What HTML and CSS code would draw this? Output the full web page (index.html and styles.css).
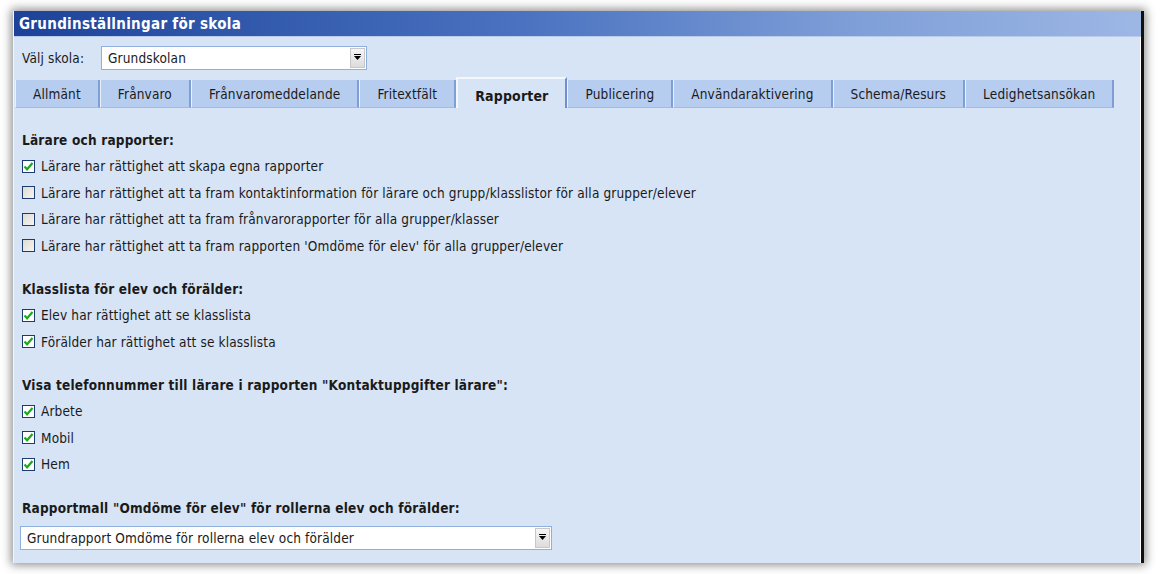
FILE: index.html
```html
<!DOCTYPE html>
<html lang="sv">
<head>
<meta charset="utf-8">
<title>Grundinställningar för skola</title>
<link rel="stylesheet" href="styles.css">
</head>
<body>
<div class="stage">
  <div class="panel">
    <div class="titlebar">Grundinställningar för skola</div>
    <div class="panel-body">
      <div class="school-row">
        <span class="school-label">Välj skola:</span>
        <div class="select select-school">
          <span class="select-value">Grundskolan</span>
          <span class="select-btn"><svg width="9" height="7" viewBox="0 0 9 7"><rect x="1" y="0" width="7" height="1" fill="#000"/><path d="M1 2h7L4.5 6z" fill="#000"/></svg></span>
        </div>
      </div>
      <div class="tabs">
        <div class="tab">Allmänt</div>
        <div class="tab">Frånvaro</div>
        <div class="tab">Frånvaromeddelande</div>
        <div class="tab">Fritextfält</div>
        <div class="tab active">Rapporter</div>
        <div class="tab">Publicering</div>
        <div class="tab">Användaraktivering</div>
        <div class="tab">Schema/Resurs</div>
        <div class="tab">Ledighetsansökan</div>
      </div>
      <div class="content">
        <section class="group">
          <h3 class="group-title">Lärare och rapporter:</h3>
          <label class="check-row"><span class="cb checked"><svg viewBox="0 0 11 11"><path d="M1.5 5.5l2.6 2.8L9.5 2" fill="none" stroke="#1fa81f" stroke-width="2.2"/></svg></span>Lärare har rättighet att skapa egna rapporter</label>
          <label class="check-row"><span class="cb"></span>Lärare har rättighet att ta fram kontaktinformation för lärare och grupp/klasslistor för alla grupper/elever</label>
          <label class="check-row"><span class="cb"></span>Lärare har rättighet att ta fram frånvarorapporter för alla grupper/klasser</label>
          <label class="check-row"><span class="cb"></span>Lärare har rättighet att ta fram rapporten 'Omdöme för elev' för alla grupper/elever</label>
        </section>
        <section class="group">
          <h3 class="group-title">Klasslista för elev och förälder:</h3>
          <label class="check-row"><span class="cb checked"><svg viewBox="0 0 11 11"><path d="M1.5 5.5l2.6 2.8L9.5 2" fill="none" stroke="#1fa81f" stroke-width="2.2"/></svg></span>Elev har rättighet att se klasslista</label>
          <label class="check-row"><span class="cb checked"><svg viewBox="0 0 11 11"><path d="M1.5 5.5l2.6 2.8L9.5 2" fill="none" stroke="#1fa81f" stroke-width="2.2"/></svg></span>Förälder har rättighet att se klasslista</label>
        </section>
        <section class="group">
          <h3 class="group-title">Visa telefonnummer till lärare i rapporten "Kontaktuppgifter lärare":</h3>
          <label class="check-row"><span class="cb checked"><svg viewBox="0 0 11 11"><path d="M1.5 5.5l2.6 2.8L9.5 2" fill="none" stroke="#1fa81f" stroke-width="2.2"/></svg></span>Arbete</label>
          <label class="check-row"><span class="cb checked"><svg viewBox="0 0 11 11"><path d="M1.5 5.5l2.6 2.8L9.5 2" fill="none" stroke="#1fa81f" stroke-width="2.2"/></svg></span>Mobil</label>
          <label class="check-row"><span class="cb checked"><svg viewBox="0 0 11 11"><path d="M1.5 5.5l2.6 2.8L9.5 2" fill="none" stroke="#1fa81f" stroke-width="2.2"/></svg></span>Hem</label>
        </section>
        <section class="group">
          <h3 class="group-title">Rapportmall "Omdöme för elev" för rollerna elev och förälder:</h3>
          <div class="select select-template">
            <span class="select-value">Grundrapport Omdöme för rollerna elev och förälder</span>
            <span class="select-btn"><svg width="9" height="7" viewBox="0 0 9 7"><rect x="1" y="0" width="7" height="1" fill="#000"/><path d="M1 2h7L4.5 6z" fill="#000"/></svg></span>
          </div>
        </section>
      </div>
    </div>
  </div>
</div>
</body>
</html>
```

FILE: styles.css
```css
* { box-sizing: border-box; }
html, body { margin: 0; padding: 0; }
body {
  background: #ffffff;
  font-family: "DejaVu Sans Condensed", "Liberation Sans", sans-serif;
  font-size: 13.5px;
  letter-spacing: 0.15px;
  color: #1a1a1a;
  width: 1160px;
  height: 574px;
  overflow: hidden;
}
.stage {
  padding: 11px 0 0 13px;
}
.panel {
  width: 1131px;
  height: 552px;
  background: #d6e4f6;
  border-left: 1px solid #f2f6fb;
  border-right: 3px solid #111111;
  box-shadow: 0 0 9px 2px rgba(0, 0, 0, 0.45);
  display: flex;
  flex-direction: column;
}
.titlebar {
  height: 26px;
  background: linear-gradient(to right, #1c4399 0%, #4a72c0 45%, #7f9fd8 75%, #9db7e5 100%);
  color: #ffffff;
  font-weight: bold;
  font-size: 15px;
  letter-spacing: 0.3px;
  line-height: 26px;
  padding-left: 5px;
  border-bottom: 1px solid #b9cdea;
}
.panel-body {
  flex: 1;
  border-right: 1px solid #ffffff;
}
.school-row {
  display: flex;
  align-items: center;
  padding: 8px 0 0 8px;
  height: 33px;
}
.school-label {
  width: 79px;
}
.select {
  display: flex;
  align-items: center;
  height: 24px;
  background: #ffffff;
  border: 1px solid #8fb0de;
  padding: 1px;
}
.select-school { width: 266px; }
.select-template { width: 532px; }
.select-value {
  flex: 1;
  padding-left: 5px;
  white-space: nowrap;
  overflow: hidden;
}
.select-btn {
  width: 15px;
  height: 20px;
  display: flex;
  align-items: center;
  justify-content: center;
  background: linear-gradient(#f6f6f6, #dcdcdc);
  border: 1px solid #c8c8c8;
}
.tabs {
  display: flex;
  align-items: flex-end;
  padding: 9px 0 0 1px;
  height: 38px;
}
.tab {
  height: 28px;
  line-height: 29px;
  padding: 0 17px;
  background: #b6cdf0;
  border-left: 1px solid #eaf1fb;
  border-right: 2px solid #7e9ed6;
  border-bottom: 1px solid #9fbbe6;
  color: #1a1a1a;
  white-space: nowrap;
  overflow: hidden;
}
.tab.active {
  height: 31px;
  line-height: 29px;
  padding-top: 3px;
  background: #d6e4f6;
  border: 2px solid #f4f8fd;
  border-bottom: none;
  border-right: 2px solid #6f90cc;
  font-weight: bold;
  font-size: 14px;
}
.content {
  padding: 19px 0 0 8px;
  display: flex;
  flex-direction: column;
  gap: 17px;
}
.group {
  display: flex;
  flex-direction: column;
}
.group-title {
  margin: 0;
  font-size: 13.5px;
  letter-spacing: 0.2px;
  font-weight: bold;
  height: 26px;
  line-height: 26px;
}
.check-row {
  display: flex;
  align-items: center;
  height: 26.5px;
  gap: 6px;
  white-space: nowrap;
}
.cb {
  width: 13px;
  height: 13px;
  border: 1px solid #1c3b6e;
  background: linear-gradient(135deg, #dedbd2, #f6f5f1);
  display: flex;
  align-items: center;
  justify-content: center;
}
.cb.checked { background: #ffffff; }
.cb svg { width: 11px; height: 11px; }
.group .select { margin-top: 5px; margin-left: -2px; }
```
